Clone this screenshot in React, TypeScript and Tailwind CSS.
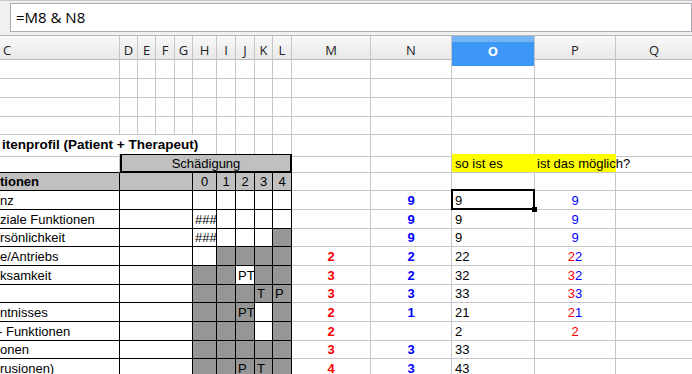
import React from "react";
import { twMerge } from "tailwind-merge";

const GRID =
  "grid grid-cols-[120px_18px_18px_19px_18px_24px_19px_19px_18px_19px_79px_81px_83px_81px_80px]";

const HEIGHTS = [
  "h-[19px]", "h-[19px]", "h-[19px]", "h-[18px]", "h-[19px]", "h-[19px]",
  "h-[18px]", "h-[19px]", "h-[19px]", "h-[18px]", "h-[19px]", "h-[19px]",
  "h-[18px]", "h-[19px]", "h-[19px]", "h-[18px]", "h-[19px]",
];

type CellProps = { className?: string; children?: React.ReactNode };

const Cell = ({ className = "", children }: CellProps) => (
  <div
    className={twMerge(
      "flex items-end overflow-hidden whitespace-nowrap border-r border-b border-[#c6c6c6] pb-px text-[13px] leading-[15px] text-black",
      className
    )}
  >
    {children}
  </div>
);

// Zeilen der Tabelle (H..L: 1 = grau)
type DataRow = {
  label: string;
  labelClass?: string;
  gray: number[];
  marks: string[];
  m?: string;
  n?: string;
  o?: string;
  p?: [string, string];
};

const ROWS: DataRow[] = [
  { label: "nz", gray: [0, 0, 0, 0, 0], marks: ["", "", "", "", ""], n: "9", o: "9", p: ["", "9"] },
  { label: "ziale Funktionen", gray: [0, 0, 0, 0, 0], marks: ["###", "", "", "", ""], n: "9", o: "9", p: ["", "9"] },
  { label: "rsönlichkeit", gray: [0, 0, 0, 0, 1], marks: ["###", "", "", "", ""], n: "9", o: "9", p: ["", "9"] },
  { label: "e/Antriebs", gray: [0, 1, 1, 1, 1], marks: ["", "", "", "", ""], m: "2", n: "2", o: "22", p: ["2", "2"] },
  { label: "ksamkeit", gray: [1, 1, 0, 1, 1], marks: ["", "", "PT", "", ""], m: "3", n: "2", o: "32", p: ["3", "2"] },
  { label: "", gray: [1, 1, 1, 1, 1], marks: ["", "", "", "T", "P"], m: "3", n: "3", o: "33", p: ["3", "3"] },
  { label: "ntnisses", gray: [1, 1, 1, 0, 1], marks: ["", "", "PT", "", ""], m: "2", n: "1", o: "21", p: ["2", "1"] },
  { label: "- Funktionen", labelClass: "-ml-[2px]", gray: [1, 1, 1, 0, 1], marks: ["", "", "", "", ""], m: "2", o: "2", p: ["2", ""] },
  { label: "onen", gray: [1, 1, 1, 1, 1], marks: ["", "", "", "", ""], m: "3", n: "3", o: "33" },
  { label: "rusionen)", gray: [1, 1, 1, 1, 1], marks: ["", "", "P", "T", ""], m: "4", n: "3", o: "43" },
];

const Right = ({ m, n, o, p, selected }: { m?: string; n?: string; o?: string; p?: [string, string]; selected?: boolean }) => (
  <>
    <Cell className="justify-center font-bold text-[#ff0000]">{m}</Cell>
    <Cell className="justify-center font-bold text-[#0000ff]">{n}</Cell>
    <Cell className={selected ? "relative overflow-visible pl-[3px]" : "pl-[3px]"}>
      {o}
      {selected && (
        <>
          <span className="absolute -left-px -top-[2px] -right-px -bottom-px z-10 border-2 border-black" />
          <span className="absolute -right-[3px] -bottom-[3px] z-10 h-[5px] w-[5px] bg-black" />
        </>
      )}
    </Cell>
    <Cell className="justify-center">
      {p && (
        <>
          <span className="text-[#ff0000]">{p[0]}</span>
          <span className="text-[#0000ff]">{p[1]}</span>
        </>
      )}
    </Cell>
    <Cell />
  </>
);

const EmptyRow = ({ h }: { h: string }) => (
  <div className={`${GRID} ${h}`}>
    {Array.from({ length: 15 }).map((_, i) => (
      <Cell key={i} />
    ))}
  </div>
);

const HEADERS = ["D", "E", "F", "G", "H", "I", "J", "K", "L", "M", "N"];

export default function App() {
  return (
    <div className="h-[374px] w-[692px] overflow-hidden bg-white font-['Liberation_Sans',Arial,sans-serif]">
      {/* Eingabezeile */}
      <div className="h-[35px] border-t border-[#c8c8c8] bg-[#f0f0f0] pl-[10px] pt-[2px]">
        <div className="flex h-[29px] items-center border border-[#abadb3] bg-white pl-[5px] font-['Open_Sans',sans-serif] text-[15px] text-black">
          =M8 &amp; N8
        </div>
      </div>

      {/* Spaltenköpfe */}
      <div className={`${GRID} h-[25px] border-t border-b border-[#b8b8b8] bg-linear-to-b from-[#f9f9f9] to-[#e8e8e8] font-['Open_Sans',sans-serif] text-[13px] text-[#222]`}>
        <div className="flex items-center border-r border-[#c6c6c6] pl-[3px]">C</div>
        {HEADERS.map((h) => (
          <div key={h} className="flex items-center justify-center border-r border-[#c6c6c6]">
            {h}
          </div>
        ))}
        <div className="flex flex-col border-r border-[#c6c6c6]">
          <div className="h-[6px] bg-[#74b3f4]" />
          <div className="flex flex-1 items-center justify-center bg-[#3d97f6] pb-[4px] font-bold text-white">O</div>
        </div>
        <div className="flex items-center justify-center border-r border-[#c6c6c6]">P</div>
        <div className="flex items-center justify-center pr-[4px]">Q</div>
      </div>

      {/* leere Zeilen */}
      {HEIGHTS.slice(0, 4).map((h, i) => (
        <EmptyRow key={i} h={h} />
      ))}

      {/* Titel */}
      <div className={`${GRID} ${HEIGHTS[4]}`}>
        <Cell className="relative z-10 overflow-visible border-r-0 pl-[2px] text-[13.5px] font-bold">
          itenprofil (Patient + Therapeut)
        </Cell>
        <Cell className="border-r-0 border-b-black" />
        <Cell className="border-r-0 border-b-black" />
        <Cell className="border-r-0 border-b-black" />
        <Cell className="border-r-0 border-b-black" />
        <Cell className="border-b-black" />
        <Cell className="border-b-black" />
        <Cell className="border-b-black" />
        <Cell className="border-b-black" />
        <Cell className="border-b-black" />
        <Cell />
        <Cell />
        <Cell />
        <Cell />
        <Cell />
      </div>

      {/* Schädigung */}
      <div className={`${GRID} ${HEIGHTS[5]}`}>
        <Cell className="border-b-black" />
        <Cell className="col-span-9 justify-center border-t border-b-2 border-l-2 border-r-2 border-black bg-[#c0c0c0] pb-0">
          Schädigung
        </Cell>
        <Cell />
        <Cell />
        <Cell className="border-r-[#ffff00] bg-[#ffff00] pl-[3px]">so ist es</Cell>
        <Cell className="relative z-10 overflow-visible border-r-0 bg-[#ffff00] pl-[2px]">ist das möglich?</Cell>
        <Cell />
      </div>

      {/* Kopfzeile */}
      <div className={`${GRID} ${HEIGHTS[6]}`}>
        <Cell className="border-black bg-[#c0c0c0] font-bold">tionen</Cell>
        <Cell className="col-span-4 border-black bg-[#c0c0c0]" />
        {["0", "1", "2", "3", "4"].map((d) => (
          <Cell key={d} className="justify-center border-black bg-[#c0c0c0]">
            {d}
          </Cell>
        ))}
        <Right />
      </div>

      {/* Daten */}
      {ROWS.map((r, i) => (
        <div key={i} className={`${GRID} ${HEIGHTS[7 + i]}`}>
          <Cell className="border-black">
            <span className={r.labelClass}>{r.label}</span>
          </Cell>
          <Cell className="col-span-4 border-black" />
          {r.gray.map((g, j) => (
            <Cell
              key={j}
              className={g ? "border-black bg-[#969696] pl-[2px]" : "border-black pl-[2px]"}
            >
              {r.marks[j]}
            </Cell>
          ))}
          <Right m={r.m} n={r.n} o={r.o} p={r.p} selected={i === 0} />
        </div>
      ))}
    </div>
  );
}
